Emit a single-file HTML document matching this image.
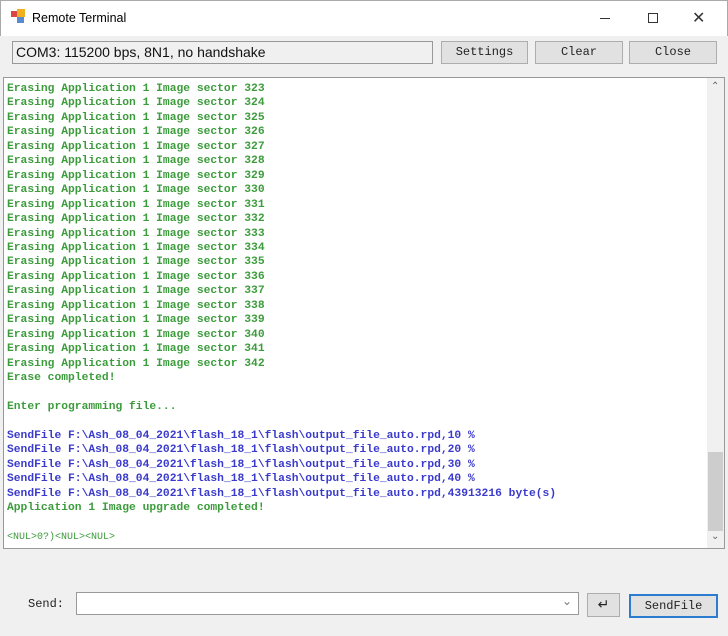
<!DOCTYPE html>
<html><head><style>
body{margin:0;width:728px;height:636px;background:#f0f0f0;position:relative;overflow:hidden;font-family:"Liberation Sans",sans-serif}
.abs{position:absolute;box-sizing:border-box}
.title{left:0;top:0;width:728px;height:36px;background:#fff;border:1px solid #aaa;border-bottom:none}
.btn{background:#e1e1e1;border:1px solid #adadad;font-family:"Liberation Mono",monospace;font-size:12px;text-align:center;line-height:20px;color:#222}
.term{left:3px;top:77px;width:722px;height:472px;background:#fff;border:1px solid #999}
pre{margin:0;position:absolute;left:3px;top:4px;font-family:"Liberation Mono",monospace;font-weight:bold;font-size:11.3px;line-height:14.45px;color:#3c9c3c}
.b{color:#3a3acc}
</style></head><body>
<div class="abs title"></div>
<div class="abs" style="left:11px;top:11px;width:6px;height:6px;background:#d44"></div>
<div class="abs" style="left:17px;top:9px;width:8px;height:8px;background:#f0b020"></div>
<div class="abs" style="left:17px;top:17px;width:7px;height:6px;background:#5a8ad0"></div>
<div class="abs" style="left:32px;top:11px;font-size:12.5px;color:#000">Remote Terminal</div>
<div class="abs" style="left:600px;top:18px;width:10px;height:1px;background:#333"></div>
<div class="abs" style="left:648px;top:13px;width:10px;height:10px;border:1px solid #333"></div>
<div class="abs" style="left:692px;top:8px;font-size:16px;color:#333">✕</div>
<div class="abs" style="left:12px;top:41px;width:421px;height:23px;background:#f0f0f0;border:1px solid #999;font-size:14px;line-height:21px;padding-left:3px;color:#111">COM3: 115200 bps, 8N1, no handshake</div>
<div class="abs btn" style="left:441px;top:41px;width:87px;height:23px">Settings</div>
<div class="abs btn" style="left:535px;top:41px;width:88px;height:23px">Clear</div>
<div class="abs btn" style="left:629px;top:41px;width:88px;height:23px">Close</div>
<div class="abs term">
<pre>Erasing Application 1 Image sector 323
Erasing Application 1 Image sector 324
Erasing Application 1 Image sector 325
Erasing Application 1 Image sector 326
Erasing Application 1 Image sector 327
Erasing Application 1 Image sector 328
Erasing Application 1 Image sector 329
Erasing Application 1 Image sector 330
Erasing Application 1 Image sector 331
Erasing Application 1 Image sector 332
Erasing Application 1 Image sector 333
Erasing Application 1 Image sector 334
Erasing Application 1 Image sector 335
Erasing Application 1 Image sector 336
Erasing Application 1 Image sector 337
Erasing Application 1 Image sector 338
Erasing Application 1 Image sector 339
Erasing Application 1 Image sector 340
Erasing Application 1 Image sector 341
Erasing Application 1 Image sector 342
Erase completed!

Enter programming file...

<span class="b">SendFile F:\Ash_08_04_2021\flash_18_1\flash\output_file_auto.rpd,10 %
SendFile F:\Ash_08_04_2021\flash_18_1\flash\output_file_auto.rpd,20 %
SendFile F:\Ash_08_04_2021\flash_18_1\flash\output_file_auto.rpd,30 %
SendFile F:\Ash_08_04_2021\flash_18_1\flash\output_file_auto.rpd,40 %
SendFile F:\Ash_08_04_2021\flash_18_1\flash\output_file_auto.rpd,43913216 byte(s)</span>
Application 1 Image upgrade completed!

<span style="font-weight:normal;font-size:10px">&lt;NUL&gt;0?)&lt;NUL&gt;&lt;NUL&gt;</span></pre>
<div class="abs" style="left:703px;top:0;width:17px;height:470px;background:#f0f0f0"></div>
<div class="abs" style="left:704px;top:374px;width:15px;height:79px;background:#cdcdcd"></div>
<div class="abs" style="left:707px;top:3px;font-size:10px;color:#666">⌃</div>
<div class="abs" style="left:707px;top:453px;font-size:10px;color:#666">⌄</div>
</div>
<div class="abs" style="left:28px;top:597px;font-family:'Liberation Mono',monospace;font-size:12px;color:#222">Send:</div>
<div class="abs" style="left:76px;top:592px;width:503px;height:23px;background:#fff;border:1px solid #999"></div>
<div class="abs" style="left:562px;top:594px;font-size:12px;color:#777">⌄</div>
<div class="abs btn" style="left:587px;top:593px;width:33px;height:24px;font-family:'Liberation Sans';font-size:14px">↵</div>
<div class="abs btn" style="left:629px;top:594px;width:89px;height:24px;border:2px solid #2b7bd0;line-height:20px">SendFile</div>
</body></html>
